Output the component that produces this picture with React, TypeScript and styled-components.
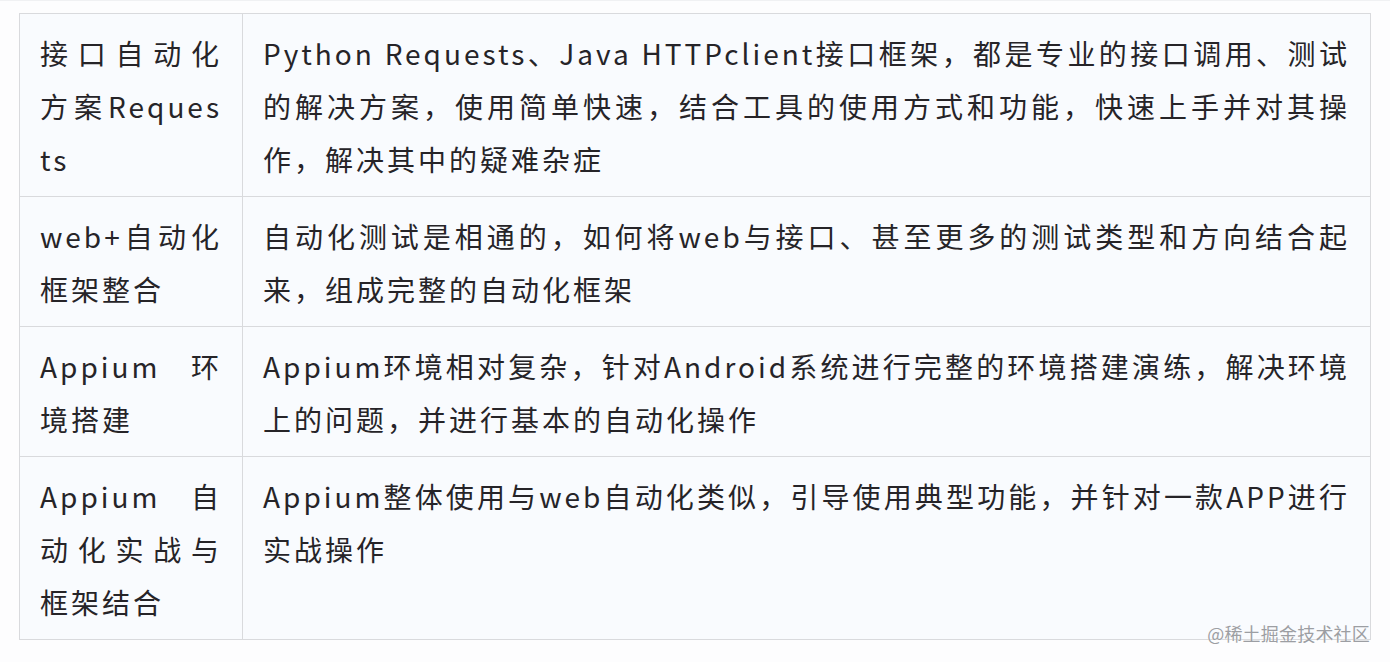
import React from "react";
import styled, { createGlobalStyle } from "styled-components";

const Global = createGlobalStyle`
  html, body {
    margin: 0;
    padding: 0;
    background: #fdfdfe;
  }
  body {
    font-family: "Noto Sans CJK SC", "Noto Sans", sans-serif;
  }
`;

const Page = styled.div`
  position: relative;
  width: 1390px;
  height: 662px;
  box-sizing: border-box;
  padding: 12px 0 0 19px;
  border-top: 1px solid #f0f1f3;
`;

const Table = styled.table`
  border-collapse: collapse;
  width: 1352px;
  background: #f9fbfe;
  table-layout: fixed;
`;

const Row = styled.tr``;

const Cell = styled.td<{ $w?: number }>`
  ${(p) => (p.$w ? `width: ${p.$w}px;` : "")}
  border: 1px solid #d9dadd;
  box-sizing: border-box;
  padding: 13px 20px 10px 20px;
  vertical-align: top;
  font-family: "Noto Sans CJK SC", "Noto Sans", sans-serif;
  font-size: 28px;
  line-height: 53px;
  letter-spacing: 3px;
  color: #262428;
`;

const Line = styled.span<{ $fill?: boolean }>`
  display: block;
  white-space: nowrap;
  text-align: ${(p) => (p.$fill ? "justify" : "left")};
  text-align-last: ${(p) => (p.$fill ? "justify" : "left")};
`;

const Watermark = styled.div`
  position: absolute;
  right: 20px;
  bottom: 18px;
  font-family: "Noto Sans CJK SC", sans-serif;
  font-size: 18px;
  line-height: 22px;
  letter-spacing: 0.2px;
  color: #9c9ea3;
  text-shadow: 0 0 1px #ffffff;
`;

type RowData = { left: string[]; right: string[] };

const rows: RowData[] = [
  {
    left: ["接口自动化", "方案Reques", "ts"],
    right: [
      "Python Requests、Java HTTPclient接口框架，都是专业的接口调用、测试",
      "的解决方案，使用简单快速，结合工具的使用方式和功能，快速上手并对其操",
      "作，解决其中的疑难杂症",
    ],
  },
  {
    left: ["web+自动化", "框架整合"],
    right: [
      "自动化测试是相通的，如何将web与接口、甚至更多的测试类型和方向结合起",
      "来，组成完整的自动化框架",
    ],
  },
  {
    left: ["Appium 环", "境搭建"],
    right: [
      "Appium环境相对复杂，针对Android系统进行完整的环境搭建演练，解决环境",
      "上的问题，并进行基本的自动化操作",
    ],
  },
  {
    left: ["Appium 自", "动化实战与", "框架结合"],
    right: [
      "Appium整体使用与web自动化类似，引导使用典型功能，并针对一款APP进行",
      "实战操作",
    ],
  },
];

const Lines: React.FC<{ lines: string[] }> = ({ lines }) => (
  <>
    {lines.map((l, i) => (
      <Line key={i} $fill={i < lines.length - 1}>
        {l}
      </Line>
    ))}
  </>
);

export default function App() {
  return (
    <Page>
      <Global />
      <Table>
        <tbody>
          {rows.map((r, i) => (
            <Row key={i}>
              <Cell $w={223}>
                <Lines lines={r.left} />
              </Cell>
              <Cell>
                <Lines lines={r.right} />
              </Cell>
            </Row>
          ))}
        </tbody>
      </Table>
      <Watermark>@稀土掘金技术社区</Watermark>
    </Page>
  );
}
